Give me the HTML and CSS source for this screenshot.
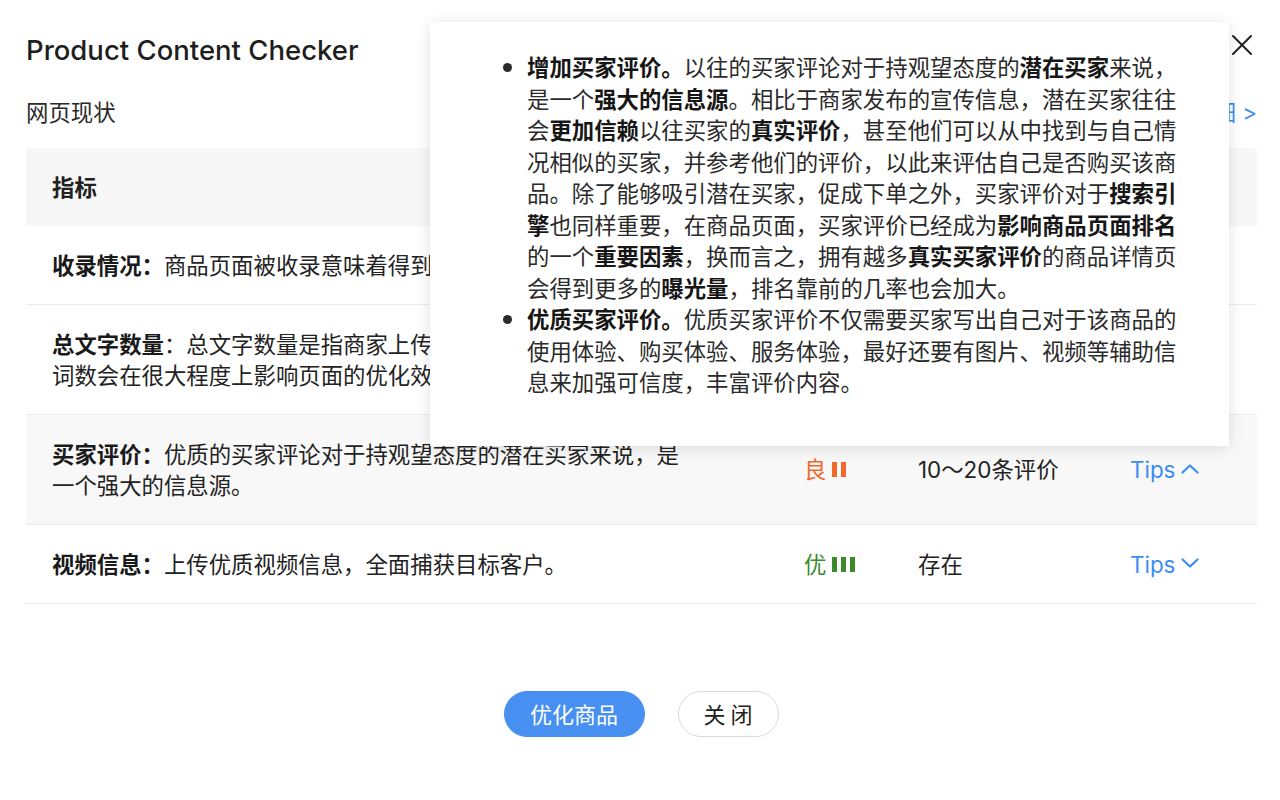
FILE: index.html
```html
<!DOCTYPE html>
<html lang="zh-CN">
<head>
<meta charset="utf-8">
<title>Product Content Checker</title>
<link rel="stylesheet" href="styles.css">
</head>
<body>
<div class="page">
  <div class="header">
    <h1 class="title">Product Content Checker</h1>
    <button class="close-x" aria-label="close">
      <svg width="22" height="22" viewBox="0 0 22 22"><path d="M2 2 L20 20 M20 2 L2 20" stroke="#222" stroke-width="2" fill="none" stroke-linecap="round"/></svg>
    </button>
  </div>
  <div class="subbar">
    <span class="subtitle">网页现状</span>
    <a class="more">查看详细 &gt;</a>
  </div>
  <div class="table">
    <div class="row head">
      <div class="cell c1">指标</div>
      <div class="cell c2">等级</div>
      <div class="cell c3">现状</div>
      <div class="cell c4">建议</div>
    </div>
    <div class="row">
      <div class="cell c1"><b>收录情况：</b>商品页面被收录意味着得到了搜索引擎的认可。</div>
      <div class="cell c2"><span class="grade good">优<i></i><i></i><i></i></span></div>
      <div class="cell c3">已收录</div>
      <div class="cell c4"><span class="tips">Tips <svg width="18" height="12" viewBox="0 0 18 12"><path d="M1.5 2.5 L9 9.5 L16.5 2.5" stroke="#3d8cf3" stroke-width="2.2" fill="none" stroke-linecap="round" stroke-linejoin="round"/></svg></span></div>
    </div>
    <div class="row">
      <div class="cell c1"><b>总文字数量</b>：总文字数量是指商家上传的商品详情页中文字总单词数会在很大程度上影响页面的优化效果。</div>
      <div class="cell c2"><span class="grade fair">良<i></i><i></i></span></div>
      <div class="cell c3">300字</div>
      <div class="cell c4"><span class="tips">Tips <svg width="18" height="12" viewBox="0 0 18 12"><path d="M1.5 2.5 L9 9.5 L16.5 2.5" stroke="#3d8cf3" stroke-width="2.2" fill="none" stroke-linecap="round" stroke-linejoin="round"/></svg></span></div>
    </div>
    <div class="row shaded">
      <div class="cell c1"><b>买家评价：</b>优质的买家评论对于持观望态度的潜在买家来说，是一个强大的信息源。</div>
      <div class="cell c2"><span class="grade fair">良<i></i><i></i></span></div>
      <div class="cell c3">10～20条评价</div>
      <div class="cell c4"><span class="tips">Tips <svg width="18" height="12" viewBox="0 0 18 12"><path d="M1.5 9.5 L9 2.5 L16.5 9.5" stroke="#3d8cf3" stroke-width="2.2" fill="none" stroke-linecap="round" stroke-linejoin="round"/></svg></span></div>
    </div>
    <div class="row">
      <div class="cell c1"><b>视频信息：</b>上传优质视频信息，全面捕获目标客户。</div>
      <div class="cell c2"><span class="grade good">优<i></i><i></i><i></i></span></div>
      <div class="cell c3">存在</div>
      <div class="cell c4"><span class="tips">Tips <svg width="18" height="12" viewBox="0 0 18 12"><path d="M1.5 2.5 L9 9.5 L16.5 2.5" stroke="#3d8cf3" stroke-width="2.2" fill="none" stroke-linecap="round" stroke-linejoin="round"/></svg></span></div>
    </div>
  </div>
  <div class="actions">
    <button class="btn primary">优化商品</button>
    <button class="btn ghost">关 闭</button>
  </div>

  <div class="popover">
    <ul>
      <li><b>增加买家评价。</b>以往的买家评论对于持观望态度的<b>潜在买家</b>来说，是一个<b>强大的信息源</b>。相比于商家发布的宣传信息，潜在买家往往会<b>更加信赖</b>以往买家的<b>真实评价</b>，甚至他们可以从中找到与自己情况相似的买家，并参考他们的评价，以此来评估自己是否购买该商品。除了能够吸引潜在买家，促成下单之外，买家评价对于<b>搜索引擎</b>也同样重要，在商品页面，买家评价已经成为<b>影响商品页面排名</b>的一个<b>重要因素</b>，换而言之，拥有越多<b>真实买家评价</b>的商品详情页会得到更多的<b>曝光量</b>，排名靠前的几率也会加大。</li>
      <li><b>优质买家评价。</b>优质买家评价不仅需要买家写出自己对于该商品的使用体验、购买体验、服务体验，最好还要有图片、视频等辅助信息来加强可信度，丰富评价内容。</li>
    </ul>
  </div>
</div>
</body>
</html>
```

FILE: styles.css
```css
* { box-sizing: border-box; }
html, body { margin: 0; padding: 0; background: #fff; }
body {
  font-family: Inter, "Noto Sans CJK SC", sans-serif;
  color: #222;
  font-size: 22.4px;
  line-height: 31px;
}
.page {
  position: relative;
  width: 1280px;
  height: 800px;
  padding: 30px 23px 0 26px;
}
.header {
  display: flex;
  justify-content: space-between;
  align-items: center;
  height: 40px;
}
.title {
  margin: 0;
  font-family: Inter, "Liberation Sans", sans-serif;
  font-weight: 500;
  font-size: 27.5px;
  line-height: 40px;
  color: #1e1e1e;
}
.close-x {
  border: 0;
  background: none;
  padding: 0;
  margin-right: 4px;
  margin-top: -10px;
  width: 22px;
  height: 22px;
  display: flex;
}
.subbar {
  display: flex;
  justify-content: space-between;
  align-items: center;
  margin-top: 22px;
  height: 40px;
}
.subtitle { color: #2a2a2a; }
.more { color: #3d8cf3; }
.table { margin-top: 16px; }
.row {
  display: grid;
  grid-template-columns: 754px 112px 212px 153px;
  align-items: center;
  border-bottom: 1px solid #ececec;
}
.row.head {
  background: #f7f7f7;
  border-bottom: 0;
}
.row.head .cell { font-weight: 700; }
.row.shaded { background: #f8f8f8; }
.cell {
  padding: 23.5px 0 23.5px 26px;
}
.c1 { padding-right: 88px; }
.c2 { padding-left: 24px; }
.cell b { font-weight: 700; color: #1a1a1a; }
.grade {
  display: inline-flex;
  align-items: center;
  gap: 4px;
}
.grade i {
  display: inline-block;
  width: 5px;
  height: 15px;
}
.grade i:first-of-type { margin-left: 2px; }
.grade.fair { color: #f0692b; }
.grade.fair i { background: #f0692b; }
.grade.good { color: #3b8a2c; }
.grade.good i { background: #3b8a2c; }
.c3 { color: #222; }
.tips {
  color: #3d8cf3;
  display: inline-flex;
  align-items: center;
  gap: 6px;
}
.tips svg { margin-top: -2px; }
.actions {
  display: flex;
  justify-content: center;
  gap: 33px;
  margin-top: 87px;
  padding-right: 1px;
}
.btn {
  height: 46px;
  border-radius: 23px;
  font-family: "Noto Sans CJK SC", sans-serif;
  font-size: 22px;
  line-height: 42px;
  padding: 0 0 2px;
}
.btn.primary {
  width: 141px;
  background: #4790f2;
  border: 1px solid #4790f2;
  color: #fff;
}
.btn.ghost {
  width: 101px;
  background: #fff;
  border: 1px solid #d9d9d9;
  color: #222;
}
.popover {
  position: absolute;
  left: 430px;
  top: 22px;
  width: 799px;
  height: 424px;
  background: #fff;
  box-shadow: 0 2px 14px rgba(0, 0, 0, 0.12);
  padding: 29px 50px 0 41px;
  font-family: "Noto Sans CJK SC", sans-serif;
  color: #2a2a2a;
}
.popover ul {
  margin: 0;
  padding-left: 56px;
  width: 708px;
}
.popover li { line-height: 31.5px; }
.popover b { font-weight: 700; color: #161616; }
```
